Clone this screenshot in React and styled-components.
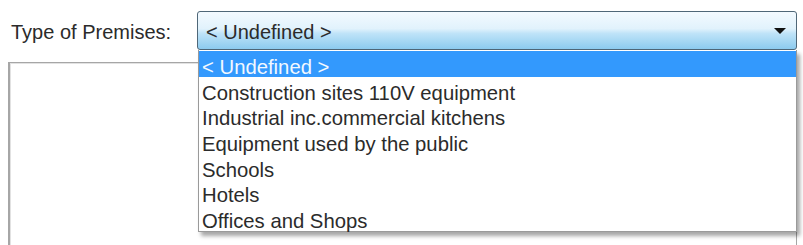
import React, { useState } from 'react';
import styled, { createGlobalStyle } from 'styled-components';

const premises = [
  '< Undefined >',
  'Construction sites 110V equipment',
  'Industrial inc.commercial kitchens',
  'Equipment used by the public',
  'Schools',
  'Hotels',
  'Offices and Shops',
];

export default function App() {
  const [selected] = useState(0);

  return (
    <>
      <GlobalStyle />
      <Page>
        <FieldRow>
          <Label>Type of Premises:</Label>
          <ComboWrap>
            <Combo>
              <ComboText>{premises[selected]}</ComboText>
              <Arrow viewBox="0 0 12 6">
                <path d="M0 0 L12 0 L6 6 Z" fill="#111" />
              </Arrow>
            </Combo>
            <Popup>
              {premises.map((item, i) => (
                <Option key={item} active={i === selected}>
                  {item}
                </Option>
              ))}
            </Popup>
          </ComboWrap>
        </FieldRow>
        <Panel />
      </Page>
    </>
  );
}

const GlobalStyle = createGlobalStyle`
  html, body {
    margin: 0;
    padding: 0;
    background: #ffffff;
    overflow: hidden;
  }
  body {
    font-family: "Liberation Sans", Arial, sans-serif;
    color: #2b2b2b;
  }
`;

const Page = styled.div`
  width: 803px;
  height: 245px;
  padding-top: 11px;
  box-sizing: border-box;
  display: flex;
  flex-direction: column;
`;

const FieldRow = styled.div`
  display: grid;
  grid-template-columns: 197px 600px;
  align-items: center;
`;

const Label = styled.div`
  padding-left: 11px;
  font-size: 20px;
  color: #2b2b2b;
  padding-top: 3px;
`;

const ComboWrap = styled.div`
  position: relative;
`;

const Combo = styled.div`
  height: 39px;
  box-sizing: border-box;
  border: 1px solid #4f6778;
  border-radius: 3px;
  background: linear-gradient(
    to bottom,
    #f3faff 0%,
    #e1f2fc 45%,
    #bfe3f8 58%,
    #8ccbef 100%
  );
  display: flex;
  align-items: center;
  padding: 3px 10px 0 8px;
`;

const ComboText = styled.span`
  flex: 1;
  font-size: 20px;
  color: #2b2b2b;
`;

const Arrow = styled.svg`
  width: 12px;
  height: 6px;
  margin-top: -3px;
`;

const Popup = styled.div`
  position: absolute;
  top: 100%;
  left: 1px;
  right: 0;
  height: 182px;
  box-sizing: border-box;
  background: #ffffff;
  border: 1px solid #9a9a9a;
  border-top: none;
  padding-top: 1px;
  box-shadow: 3px 4px 4px rgba(0, 0, 0, 0.35);
  z-index: 2;
`;

const Option = styled.div`
  height: 25.7px;
  line-height: 25.7px;
  padding-left: 3px;
  padding-top: 4px;
  box-sizing: border-box;
  font-size: 20.3px;
  white-space: nowrap;
  color: ${(p) => (p.active ? '#f2f8ff' : '#2b2b2b')};
  background: ${(p) => (p.active ? '#3399fd' : 'transparent')};
`;

const Panel = styled.div`
  flex: 1;
  margin: 12px 6px 0 8px;
  border: 1px solid #a6a6a6;
  border-left: 2px solid #a6a6a6;
  border-bottom: none;
  box-shadow: inset 1px 1px 0 #e2e2e2;
`;
